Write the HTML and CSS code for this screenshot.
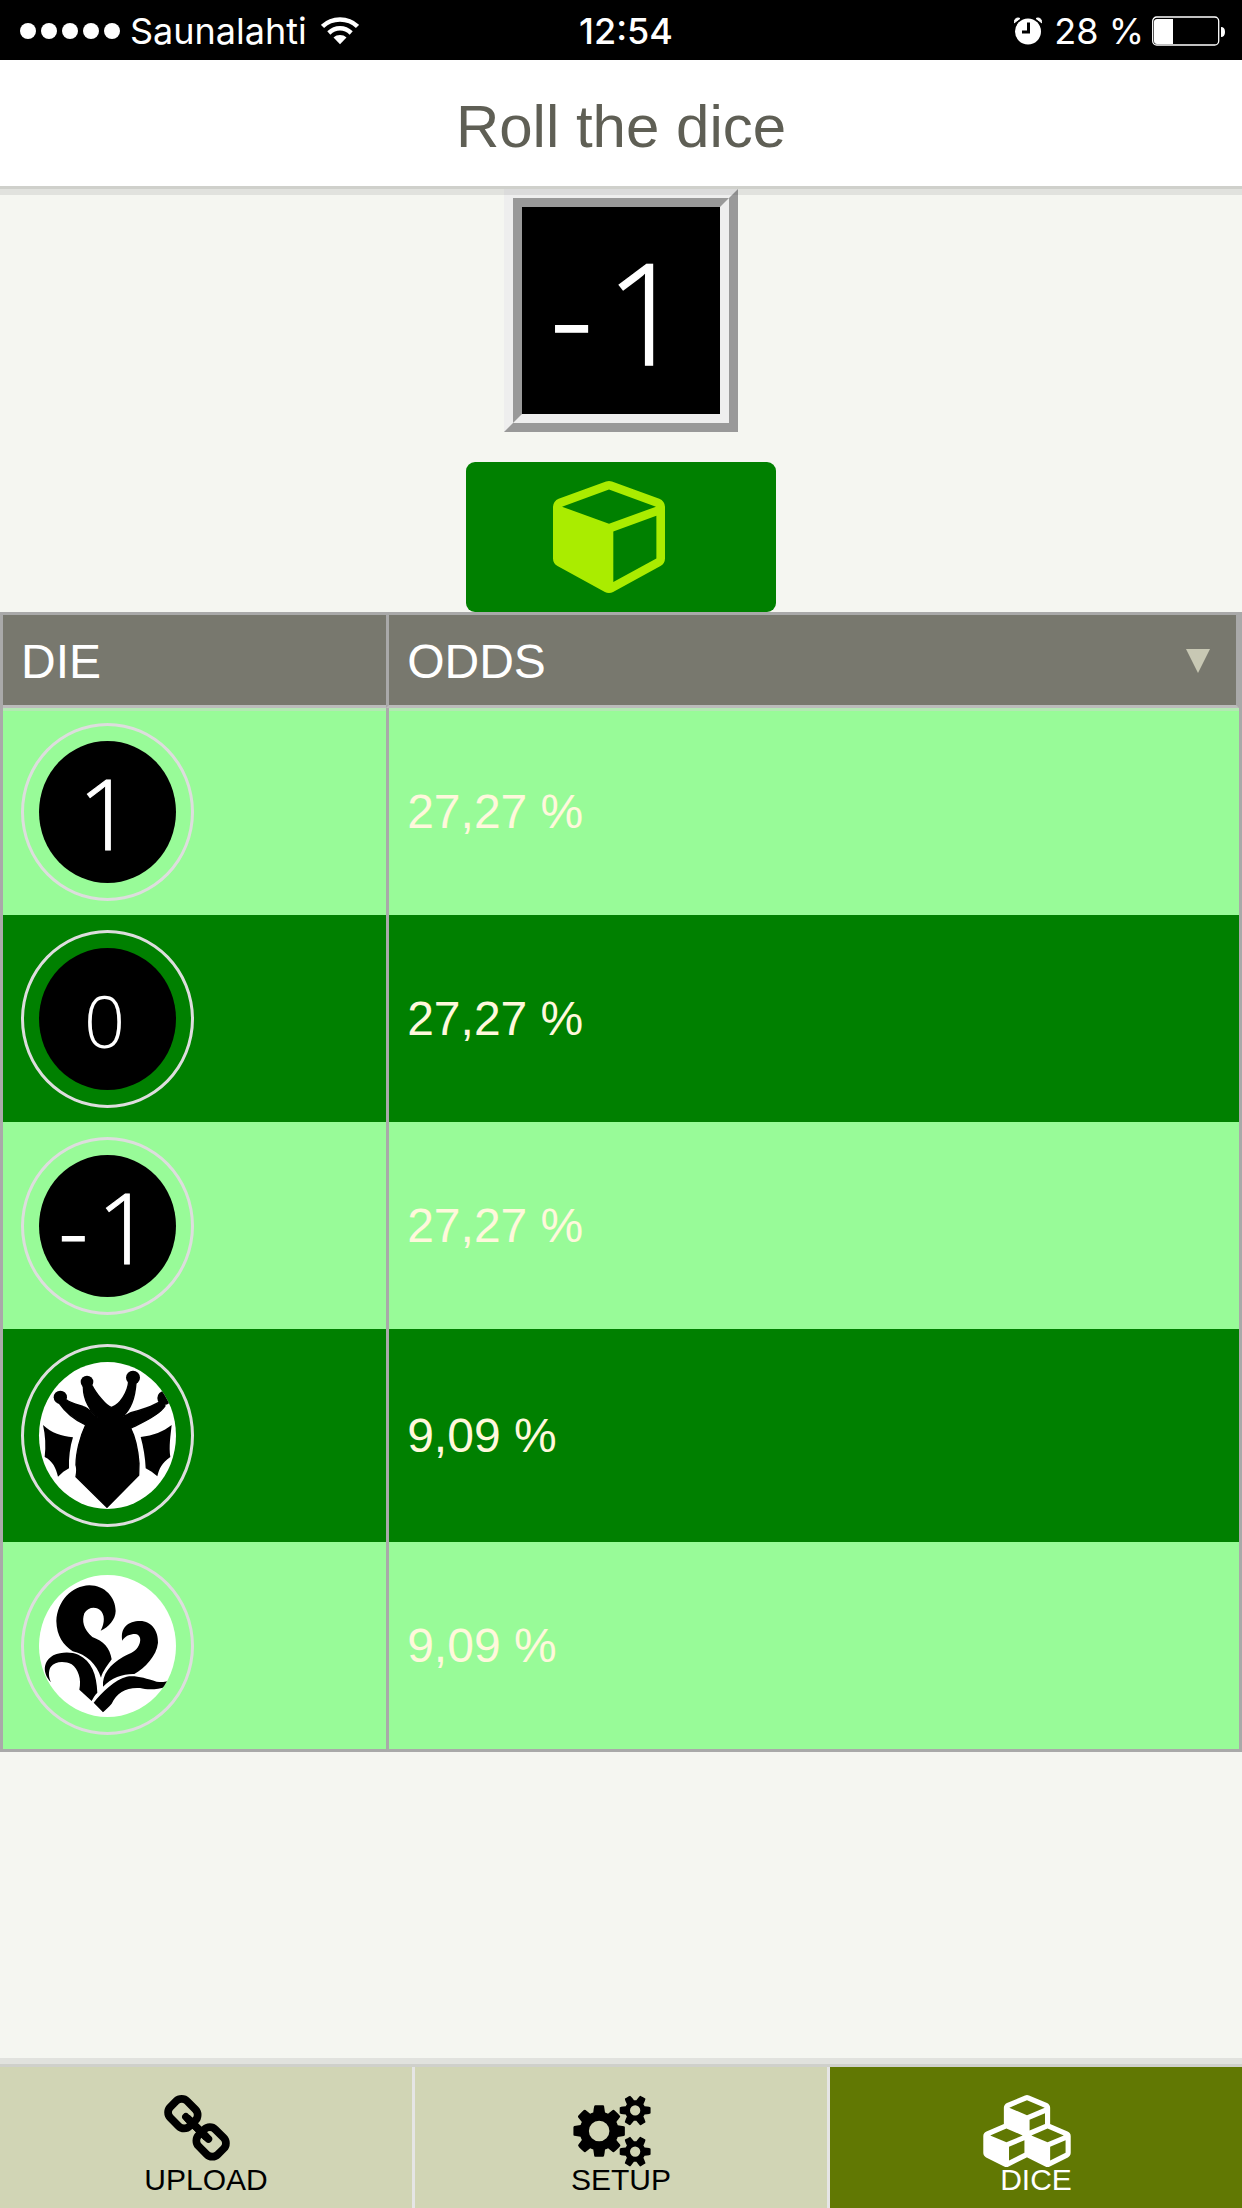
FILE: index.html
```html
<!DOCTYPE html>
<html lang="en">
<head>
<meta charset="utf-8">
<meta name="viewport" content="width=device-width">
<title>Roll the dice</title>
<link rel="stylesheet" href="styles.css">
</head>
<body>
<div class="status">
  <div class="status-left">
    <span class="signal"><i></i><i></i><i></i><i></i><i></i></span>
    <span>Saunalahti</span>
    <svg class="wifi" viewBox="0 0 38 28" width="38" height="28" aria-hidden="true">
      <g fill="none" stroke="#fff" stroke-width="4.500">
        <path d="M1.500 9.500C11 .2 27 .2 36.500 9.500"/>
        <path d="M7.800 16C14.500 9.800 23.500 9.800 30.200 16"/>
      </g>
      <path fill="#fff" d="M12.500 20.500C16 17.200 22 17.200 25.500 20.500L19 27.200Z"/>
    </svg>
  </div>
  <div class="clock">12:54</div>
  <div class="status-right">
    <svg class="alarm" viewBox="0 0 28 28" width="28" height="28" aria-hidden="true">
      <circle cx="14" cy="14.500" r="13" fill="#fff"/>
      <path d="M0 6C0 2 3 0 6 1.500ZM28 6C28 2 25 0 22 1.500Z" fill="#fff" stroke="#fff"/>
      <path d="M14.500 5.500V15H8" fill="none" stroke="#000" stroke-width="3"/>
    </svg>
    <span>28 %</span>
    <svg viewBox="0 0 74 30" width="74" height="30" aria-hidden="true">
      <rect x=".7" y="1" width="66" height="28" rx="4" fill="none" stroke="#fff" stroke-width="1.300"/>
      <path fill="#fff" d="M5 3H21V28H5Q2 28 2 25V6Q2 3 5 3ZM69 11Q73 11 73 16T69 21Z"/>
    </svg>
  </div>
</div>

<header class="toolbar"><h1>Roll the dice</h1></header>

<main>
  <section class="roller">
    <div class="frame"><div class="frame-inner">
      <svg class="face" viewBox="0 0 137 142" role="img" aria-label="Rolled -1">
        <text class="minus" x="18" y="106">-</text><text x="58" y="109">1</text>
      </svg>
    </div></div>
    <button class="roll" type="button" aria-label="Roll">
      <svg viewBox="0 128 1664 1664" width="112" height="112" aria-hidden="true"><path fill="currentColor" d="M896 1629l640-349v-636l-640 233v752zm-64-865l698-254-698-254-698 254zm832-252v768q0 35-18 65t-49 47l-704 384q-28 16-61 16t-61-16l-704-384q-31-17-49-47t-18-65v-768q0-40 23-73t61-47l704-256q22-8 44-8t44 8l704 256q38 14 61 47t23 73z"/></svg>
    </button>
  </section>

  <table class="odds">
    <colgroup><col class="col-die"><col></colgroup>
    <thead>
      <tr><th scope="col">DIE</th><th scope="col"><div class="sort">ODDS<i class="arrow"></i></div></th></tr>
    </thead>
    <tbody>
      <tr>
        <td><div class="die"><svg class="face" viewBox="0 0 137 142" role="img" aria-label="1"><text x="39" y="109">1</text></svg></div></td>
        <td>27,27 %</td>
      </tr>
      <tr>
        <td><div class="die"><svg class="face" viewBox="0 0 137 142" role="img" aria-label="0"><text class="zero" x="45" y="100">0</text></svg></div></td>
        <td>27,27 %</td>
      </tr>
      <tr>
        <td><div class="die"><svg class="face" viewBox="0 0 137 142" role="img" aria-label="-1"><text class="minus" x="18" y="106">-</text><text x="58" y="109">1</text></svg></div></td>
        <td>27,27 %</td>
      </tr>
      <tr class="tall">
        <td><div class="die"><svg class="emblem" viewBox="117 126 411 441" role="img" aria-label="Beetle">
          <path stroke="#000" stroke-width="4" d="M335 262C320 262 285 215 277 198L250 200C250 240 270 275 298 295C280 285 268 265 250 260C235 255 210 248 200 240L178 250C195 275 225 300 257 315C240 350 228 400 228 435C232 445 230 460 228 470L321 562L416 466L417 430C414 390 405 350 392 325C415 312 475 290 495 258L480 245C460 258 420 272 395 277C385 280 375 290 368 289C390 270 405 235 408 188L386 185C384 215 360 255 335 262Z"/>
          <circle cx="181" cy="232" r="20"/><circle cx="261" cy="186" r="19"/><circle cx="399" cy="173" r="21"/><circle cx="493" cy="234" r="21"/>
          <path d="M129 315C155 340 185 348 219 352C210 380 206 415 207 445L190 455L174 470C168 445 158 422 134 411C138 380 136 345 129 315ZM515 315C490 335 460 347 422 351C430 380 436 415 437 445L455 455L472 469C478 445 485 430 511 411C506 380 512 345 515 315Z"/>
        </svg></div></td>
        <td>9,09 %</td>
      </tr>
      <tr>
        <td><div class="die"><svg class="emblem" viewBox="117 102 411 426" role="img" aria-label="Plant">
          <path d="M268 133C315 133 347 170 347 210C347 235 325 260 302 269C315 245 315 220 300 207C285 195 262 200 253 217C245 240 250 265 277 288C310 300 330 320 335 355C325 370 308 390 303 410C290 370 260 340 218 331C190 312 170 285 169 240C172 180 215 135 268 133Z"/>
          <path d="M367 299C360 260 385 240 420 240C455 240 475 270 474 305C470 345 435 380 403 399C370 398 335 410 309 437C306 400 330 370 370 347C395 335 408 332 417 312C425 295 420 280 405 279C390 279 375 285 367 299Z"/>
          <path d="M153 424C125 395 130 360 160 343C185 332 215 333 235 341C275 360 290 400 292 455C285 462 280 470 275 480L238 446C245 415 235 385 215 370C195 360 165 360 152 378C144 392 146 410 153 424Z"/>
          <path d="M309 514L281 485C305 455 345 415 380 407C410 403 435 412 470 422C485 424 495 423 503 420L497 437C470 447 440 446 420 441C380 438 350 455 335 488C325 500 315 508 309 514Z"/>
        </svg></div></td>
        <td>9,09 %</td>
      </tr>
    </tbody>
  </table>
</main>

<nav class="tabs">
  <button class="tab" type="button">
    <svg viewBox="80 16 1632 1792" width="66" height="72" aria-hidden="true"><path fill="currentColor" d="M1520 1216q0-40-28-68l-208-208q-28-28-68-28-42 0-72 32 3 3 19 18.500t21.500 21.500 15 19 13 25.500 3.500 27.500q0 40-28 68t-68 28q-15 0-27.500-3.500t-25.500-13-19-15-21.500-21.500-18.500-19q-33 31-33 73 0 40 28 68l206 207q27 27 68 27 40 0 68-26l147-146q28-28 28-67zm-703-705q0-40-28-68l-206-207q-28-28-68-28-39 0-68 27l-147 146q-28 28-28 67 0 40 28 68l208 208q27 27 68 27 42 0 72-31-3-3-19-18.500t-21.500-21.500-15-19-13-25.500-3.500-27.500q0-40 28-68t68-28q15 0 27.500 3.500t25.500 13 19 15 21.500 21.500 18.500 19q33-31 33-73zm895 705q0 120-85 203l-147 146q-83 83-203 83-121 0-204-85l-206-207q-83-83-83-203 0-123 88-209l-88-88q-86 88-208 88-120 0-204-84l-208-208q-84-84-84-204t85-203l147-146q83-83 203-83 121 0 204 85l206 207q83 83 83 203 0 123-88 209l88 88q86-88 208-88 120 0 204 84l208 208q84 84 84 204z"/><path d="M620 560L1180 1110" fill="none" stroke="currentColor" stroke-width="190" stroke-linecap="round"/></svg>
    <span>UPLOAD</span>
  </button>
  <button class="tab" type="button">
    <svg viewBox="0 0 1920 1792" width="78" height="72" aria-hidden="true"><path fill="currentColor" d="M896 896q0-106-75-181t-181-75-181 75-75 181 75 181 181 75 181-75 75-181zm768 512q0-52-38-90t-90-38-90 38-38 90q0 53 37.500 90.500t90.500 37.500 90.500-37.500 37.500-90.500zm0-1024q0-52-38-90t-90-38-90 38-38 90q0 53 37.500 90.500t90.500 37.500 90.500-37.500 37.500-90.500zm-384 421v185q0 10-7 19.500t-16 10.500l-155 24q-11 35-32 76 34 48 90 115 7 11 7 20 0 12-7 19-23 30-82.500 89.500t-78.500 59.500q-11 0-21-7l-115-90q-37 19-77 31-11 108-23 155-7 24-30 24h-186q-11 0-20-7.500t-10-17.500l-23-153q-34-10-75-31l-118 89q-7 7-20 7-11 0-21-8-144-133-144-160 0-9 7-19 10-14 41-53t47-61q-23-44-35-82l-152-24q-10-1-17-9.500t-7-19.500v-185q0-10 7-19.500t16-10.500l155-24q11-35 32-76-34-48-90-115-7-11-7-20 0-12 7-20 22-30 82-89t79-59q11 0 21 7l115 90q34-18 77-32 11-108 23-154 7-24 30-24h186q11 0 20 7.500t10 17.500l23 153q34 10 75 31l118-89q8-7 20-7 11 0 21 8 144 133 144 160 0 8-7 19-12 16-42 54t-45 60q23 48 34 82l152 23q10 2 17 10.500t7 19.500zm640 533v140q0 16-149 31-12 27-30 52 51 113 51 138 0 4-4 7-122 71-124 71-8 0-46-47t-52-68q-20 2-30 2t-30-2q-14 21-52 68t-46 47q-2 0-124-71-4-3-4-7 0-25 51-138-18-25-30-52-149-15-149-31v-140q0-16 149-31 13-29 30-52-51-113-51-138 0-4 4-7 4-2 35-20t59-34 30-16q8 0 46 46.500t52 67.500q20-2 30-2t30 2q51-71 92-112l6-2q4 0 124 70 4 3 4 7 0 25-51 138 17 23 30 52 149 15 149 31zm0-1024v140q0 16-149 31-12 27-30 52 51 113 51 138 0 4-4 7-122 71-124 71-8 0-46-47t-52-68q-20 2-30 2t-30-2q-14 21-52 68t-46 47q-2 0-124-71-4-3-4-7 0-25 51-138-18-25-30-52-149-15-149-31v-140q0-16 149-31 13-29 30-52-51-113-51-138 0-4 4-7 4-2 35-20t59-34 30-16q8 0 46 46.500t52 67.500q20-2 30-2t30 2q51-71 92-112l6-2q4 0 124 70 4 3 4 7 0 25-51 138 17 23 30 52 149 15 149 31z"/></svg>
    <span>SETUP</span>
  </button>
  <button class="tab active" type="button">
    <svg viewBox="0 0 2176 1792" width="88" height="72" aria-hidden="true"><path fill="currentColor" d="M640 1632l384-192v-314l-384 164v342zm-64-454l404-173-404-173-404 173zm1088 454l384-192v-314l-384 164v342zm-64-454l404-173-404-173-404 173zm-448-293l384-165v-266l-384 164v267zm-64-379l441-189-441-189-441 189zm1088 518v416q0 36-19 67t-52 47l-448 224q-25 14-57 14t-57-14l-448-224q-4-2-7-4-2 2-7 4l-448 224q-25 14-57 14t-57-14l-448-224q-33-16-52-47t-19-67v-416q0-38 21.500-70t56.500-48l434-186v-400q0-38 21.500-70t56.500-48l448-192q23-10 50-10t50 10l448 192q35 16 56.500 48t21.500 70v400l434 186q36 16 57 48t21 70z"/></svg>
    <span>DICE</span>
  </button>
</nav>
</body>
</html>
```
FILE: styles.css
```css
* { box-sizing: border-box; }

body {
  margin: 0;
  min-height: 100vh;
  display: flex;
  flex-direction: column;
  background: #f5f6f1;
  font-family: "Liberation Sans", Arial, sans-serif;
}

svg { display: block; }

/* Phone status bar */
.status {
  display: grid;
  grid-template-columns: 1fr auto 1fr;
  align-items: center;
  height: 60px;
  padding: 2px 16px 0 20px;
  background: #000;
  color: #fff;
  font: 36px/58px Inter, Roboto, sans-serif;
}
.status-left, .status-right { display: flex; align-items: center; }
.status-left { gap: 10px; }
.status-right { justify-content: flex-end; gap: 8px; }
.signal { display: flex; gap: 5px; }
.signal i { width: 16px; height: 16px; border-radius: 50%; background: #fff; }
.wifi { margin-left: 4px; }
.alarm { margin-right: 4px; }
.clock { padding-left: 6px; font-weight: 500; }

/* Title bar */
.toolbar {
  position: relative;
  z-index: 1;
  padding-top: 8px;
  background: #fff;
  border-bottom: 3px solid #cfd0cb;
  box-shadow: 0 6px 0 rgba(0, 0, 0, .08);
}
.toolbar h1 {
  margin: 0;
  color: #5f5f55;
  font-size: 60px;
  font-weight: 400;
  line-height: 118px;
  text-align: center;
}

main { flex: 1; }

/* Rolled die and roll button */
.roller {
  display: flex;
  flex-direction: column;
  align-items: center;
  gap: 30px;
}
.frame {
  width: 234px;
  border: 9px solid;
  border-color: #eee #999 #999 #eee;
}
.frame-inner {
  height: 225px;
  border: 9px solid;
  border-color: #999 #eee #eee #999;
  background: #000;
}
.roll {
  display: flex;
  justify-content: center;
  align-items: center;
  width: 310px;
  height: 150px;
  padding: 0 24px 0 0;
  border: 0;
  border-radius: 9px;
  background: #008000;
  color: #aaec00;
}

.face, .emblem { width: 100%; height: 100%; }
.face { background: #000; }
.face text {
  fill: #fff;
  stroke: #fff;
  stroke-width: 1px;
  font-family: "Open Sans", "Noto Sans", sans-serif;
  font-size: 97px;
  font-weight: 300;
}
.face .zero { font-size: 72px; stroke: none; }
.face .minus { font-family: Inter, sans-serif; font-size: 72px; }
.emblem { background: #fff; }

/* Odds table */
.odds {
  width: 100%;
  table-layout: fixed;
  border: 3px solid #a9a9a9;
  border-spacing: 0;
  font-size: 48px;
}
.col-die { width: 31%; }
th {
  height: 93px;
  padding: 2px 18px 0;
  border-bottom: 3px solid #bbb;
  background: #78786e;
  color: #fff;
  font-weight: 400;
  text-align: left;
}
th + th { border-right: 3px solid #a9a9a9; padding-right: 26px; }
th + th, td + td { border-left: 3px solid #a9a9a9; }
.sort { display: flex; align-items: center; justify-content: space-between; }
.arrow {
  border: solid transparent;
  border-width: 24px 12px 0;
  border-top-color: #c8c8b4;
}
td {
  height: 207px;
  padding: 0 18px;
  background: #98fb98;
  color: #fff8dc;
}
tr:nth-child(even) td { background: #008000; }
tbody tr:first-child td { box-shadow: inset 0 3px 0 rgba(221, 204, 221, .4); }
.tall td { height: 213px; }
.die {
  width: 173px;
  height: 178px;
  padding: 15px;
  border: 3px solid #ddd;
  border-radius: 50%;
}
.tall .die { height: 183px; }
.die svg { border-radius: 50%; }

/* Bottom tabs */
.tabs {
  display: flex;
  gap: 3px;
  border-top: 3px solid #cfd0cb;
  background: #e5e5e5;
  box-shadow: 0 -6px 0 rgba(0, 0, 0, .08);
}
.tab {
  flex: 1;
  display: flex;
  flex-direction: column;
  align-items: center;
  padding: 28px 0 15px;
  border: 0;
  background: #d1d5b5;
  color: #000;
  font: 30px/26px "Liberation Sans", Arial, sans-serif;
}
.tab svg { margin-right: 18px; }
.tab.active { background: #617803; color: #fff; }
```
